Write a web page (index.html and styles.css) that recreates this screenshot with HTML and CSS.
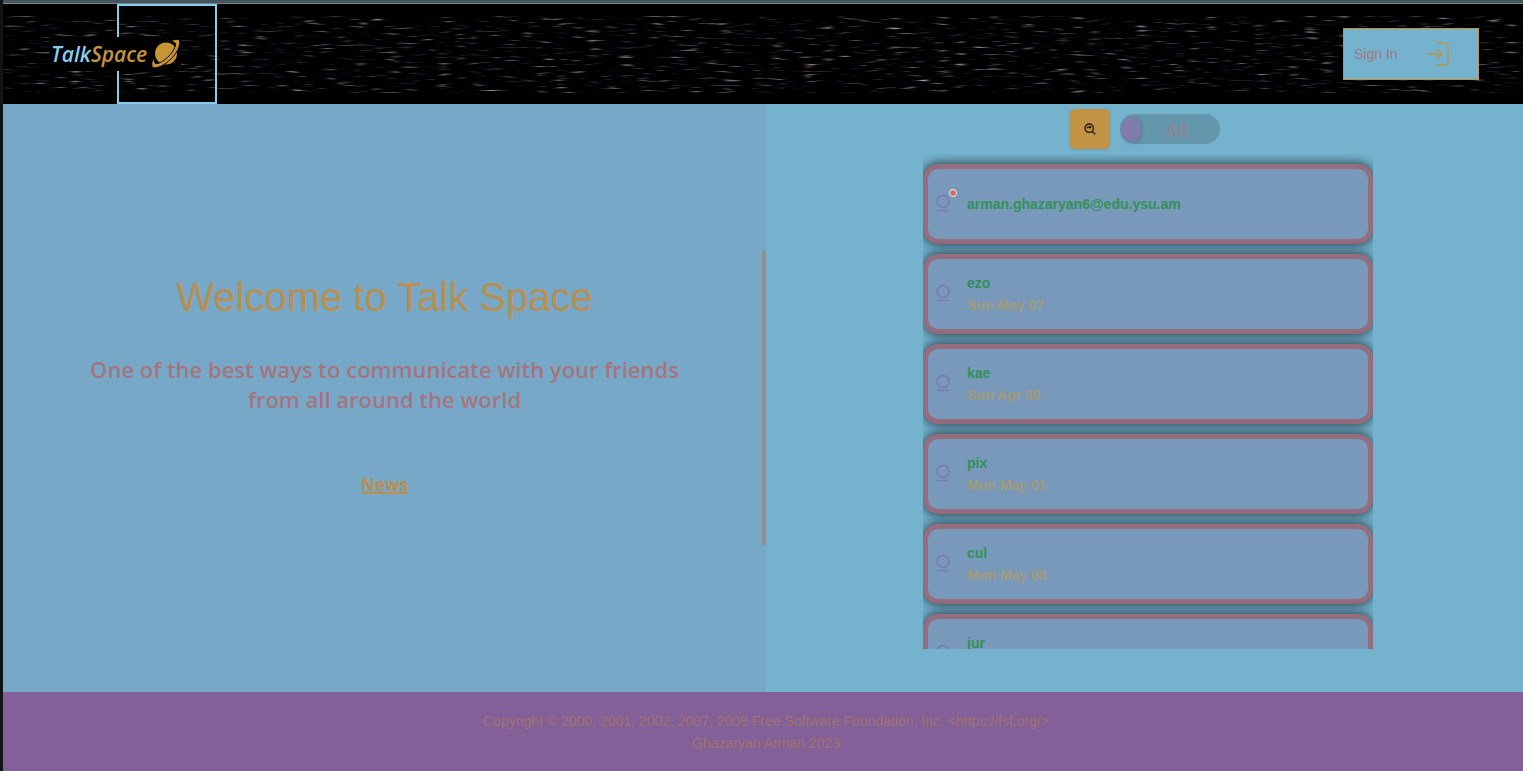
FILE: index.html
```html
<!DOCTYPE html>
<html lang="en">
<head>
<meta charset="utf-8">
<title>Talk Space</title>
<link rel="stylesheet" href="styles.css">
</head>
<body>
<svg class="defs" width="0" height="0" aria-hidden="true">
  <symbol id="user" viewBox="0 0 16 20">
    <circle cx="8" cy="7.5" r="6"/><path d="M2 16.5h12"/>
  </symbol>
</svg>
<div class="page">
  <header class="header">
    <svg class="stars" aria-hidden="true">
      <filter id="streaks" x="0" y="0" width="100%" height="100%" color-interpolation-filters="sRGB">
        <feTurbulence type="fractalNoise" baseFrequency="0.06 0.42" numOctaves="2" seed="8"/>
        <feColorMatrix values="1.3 0.9 0 0 -1.22  1.3 0.9 0 0 -1.24  1.3 0.9 0 0 -1.22  0 0 0 0 1"/>
        <feComponentTransfer>
          <feFuncR type="gamma" amplitude="1.8" exponent="1.5"/>
          <feFuncG type="gamma" amplitude="1.8" exponent="1.5"/>
          <feFuncB type="gamma" amplitude="1.8" exponent="1.5"/>
        </feComponentTransfer>
        <feGaussianBlur stdDeviation="2 0"/>
      </filter>
      <rect width="100%" height="100%" filter="url(#streaks)"/>
    </svg>
    <div class="frame"></div>
    <a class="logo" href="#"><span class="logo-talk">Talk</span><span class="logo-space">Space</span>
      <svg class="planet" viewBox="0 0 30 30" aria-hidden="true">
        <circle cx="15" cy="14.5" r="11"/>
        <path class="edge" d="M19 2C24 0 27 0 28.500 1C30 5 27 13 20 20C13 27 5 30 1.500 28.500C0 26 1 21 3.500 18C3 21 3 23 4.500 24.500C9 25 14 21 18 17C22 13 25 7 24.500 4.500C23 3 22 3 19 2Z"/>
      </svg>
    </a>
    <button class="sign-in" type="button">Sign In
      <svg viewBox="0 0 24 24" aria-hidden="true"><path d="M11 1h9q2 0 2 2v18q0 2-2 2h-9M1 12h15M11 7l5 5-5 5"/></svg>
    </button>
  </header>
  <main class="main">
    <section class="welcome">
      <h1>Welcome to Talk Space</h1>
      <p>One of the best ways to communicate with your friends from all around the world</p>
      <a href="#">News</a>
    </section>
    <section class="people">
      <div class="tools">
        <button class="search" type="button" aria-label="Search">
          <svg viewBox="0 0 12 12" aria-hidden="true"><circle cx="5.2" cy="5.2" r="4.2"/><path d="M8.2 8.2l3 3M3.2 5.2q0-1 1-1h2.3M5.5 3.2l1.2 1-1 1.2"/></svg>
        </button>
        <label class="toggle"><input type="checkbox"><span>All</span></label>
      </div>
      <ul class="list">
        <li class="card"><div class="avatar"><svg aria-hidden="true"><use href="#user"/></svg><i class="badge"></i></div><div><div class="name">arman.ghazaryan6@edu.ysu.am</div></div></li>
        <li class="card"><div class="avatar"><svg aria-hidden="true"><use href="#user"/></svg></div><div><div class="name">ezo</div><div class="date">Sun May 07</div></div></li>
        <li class="card"><div class="avatar"><svg aria-hidden="true"><use href="#user"/></svg></div><div><div class="name">kae</div><div class="date">Sun Apr 30</div></div></li>
        <li class="card"><div class="avatar"><svg aria-hidden="true"><use href="#user"/></svg></div><div><div class="name">pix</div><div class="date">Mon May 01</div></div></li>
        <li class="card"><div class="avatar"><svg aria-hidden="true"><use href="#user"/></svg></div><div><div class="name">cul</div><div class="date">Mon May 08</div></div></li>
        <li class="card"><div class="avatar"><svg aria-hidden="true"><use href="#user"/></svg></div><div><div class="name">jur</div><div class="date">&nbsp;</div></div></li>
      </ul>
    </section>
  </main>
  <footer class="footer">
    <div>Copyright © 2000, 2001, 2002, 2007, 2008 Free Software Foundation, Inc. &lt;https://fsf.org/&gt;</div>
    <div>Ghazaryan Arman 2023</div>
  </footer>
</div>
</body>
</html>
```
FILE: styles.css
```css
* { box-sizing: border-box; }

body {
  margin: 0;
  background: #121315;
  font-family: "Liberation Sans", Arial, sans-serif;
  font-size: 14px;
  line-height: 22px;
}

.defs { position: absolute; }

.page {
  display: flex;
  flex-direction: column;
  height: 100vh;
  margin-left: 3px;
  border-top: 3px solid #43555f;
}

.header {
  position: relative;
  display: flex;
  align-items: center;
  justify-content: space-between;
  flex: none;
  height: 101px;
  padding: 0 44px 0 46px;
  border-top: 1px solid #75848a;
  background: #000;
}

.stars {
  position: absolute;
  inset: 12px 0 11px;
  width: 100%;
  height: 77px;
}

.frame {
  position: absolute;
  top: 0;
  left: 114px;
  width: 100px;
  height: 100px;
  border: 2px solid #87ceeb;
}

.logo {
  position: relative;
  display: flex;
  align-items: center;
  height: 34px;
  padding-left: 2px;
  background: #000;
  font: italic 600 21px/34px "Open Sans", sans-serif;
  text-decoration: none;
}

.logo-talk { color: #87ceeb; }
.logo-space { color: #c79535; }

.planet {
  width: 30px;
  height: 30px;
  margin-left: 4px;
  fill: #c79535;
}

.planet .edge { stroke: #000; stroke-width: 1; }

.sign-in {
  position: relative;
  display: flex;
  align-items: center;
  justify-content: space-between;
  width: 136px;
  height: 52px;
  padding: 0 28px 0 10px;
  border: 1px solid #c19343;
  background: #74b2cd;
  color: #a37780;
  font: inherit;
}

.sign-in svg {
  width: 24px;
  height: 24px;
  fill: none;
  stroke: #c19343;
  stroke-width: 1.3;
}

.main {
  display: flex;
  flex: 1;
  min-height: 0;
}

.welcome {
  position: relative;
  display: flex;
  flex-direction: column;
  align-items: center;
  justify-content: center;
  width: 50.2%;
  padding: 0 80px 22px;
  background: #78a8c7;
  text-align: center;
}

.welcome::after {
  content: "";
  position: absolute;
  top: 25%;
  right: 0;
  width: 4px;
  height: 50%;
  background: #938f8d;
}

.welcome h1 {
  margin: 0;
  color: #b78f52;
  font-size: 40px;
  font-weight: 400;
  line-height: 44px;
}

.welcome p {
  max-width: 600px;
  margin: 35px 0 56px;
  color: #a5757e;
  font: 600 22px/30px "Open Sans", sans-serif;
}

.welcome a {
  color: #b78f52;
  font: 700 17px/30px "Open Sans", sans-serif;
  text-decoration-thickness: 2px;
}

.people {
  display: flex;
  flex-direction: column;
  align-items: center;
  flex: 1;
  padding: 5px 0 43px;
  background: #74b2cd;
}

.tools {
  display: flex;
  align-items: center;
  gap: 10px;
}

.search {
  display: grid;
  place-items: center;
  width: 40px;
  height: 40px;
  padding: 0;
  border: 0;
  border-radius: 5px;
  background: #c19343;
  box-shadow: 0 1px 3px #0002;
}

.search svg {
  width: 12px;
  height: 12px;
  fill: none;
  stroke: #1c160b;
  stroke-width: 1.3;
}

.toggle {
  display: flex;
  align-items: center;
  width: 100px;
  height: 30px;
  border-radius: 15px;
  background: #6496ac;
  color: #91868f;
  font: 600 18px/30px "Open Sans", sans-serif;
}

.toggle input {
  appearance: none;
  width: 18px;
  height: 25px;
  margin: 0 0 0 2px;
  border-radius: 10px;
  background: #827caa;
  box-shadow: 1px 1px 5px #0003;
}

.toggle span { flex: 1; padding: 2px 6px 0 0; text-align: center; }

.list {
  flex: 1;
  min-height: 0;
  width: 450px;
  margin: 5px 0 0 7px;
  padding: 10px 0 0;
  overflow: hidden;
  list-style: none;
}

.card {
  display: flex;
  align-items: center;
  height: 80px;
  margin-bottom: 10px;
  border: 5px solid #966c7f;
  border-radius: 15px;
  background: #7999bb;
  box-shadow: 0 0 12px #1b2d35;
  font-weight: 700;
}

.avatar {
  position: relative;
  width: 16px;
  height: 20px;
  margin: 0 16px 0 7px;
}

.avatar svg {
  display: block;
  width: 16px;
  height: 20px;
  fill: none;
  stroke: #7c78a8;
  stroke-width: 1.4;
}

.badge {
  position: absolute;
  top: -5px;
  right: -6px;
  width: 8px;
  height: 8px;
  border: 1px solid #eee;
  border-radius: 50%;
  background: #d46a70;
}

.name { color: #309256; }
.date { color: #a29a79; }

.footer {
  flex: none;
  padding: 18px 0 17px 6px;
  background: #836097;
  color: #a17273;
  text-align: center;
}

@media (max-width: 900px) {
  .list { width: 90%; margin-left: 0; }
  .welcome { padding: 0 20px; }
}
```
